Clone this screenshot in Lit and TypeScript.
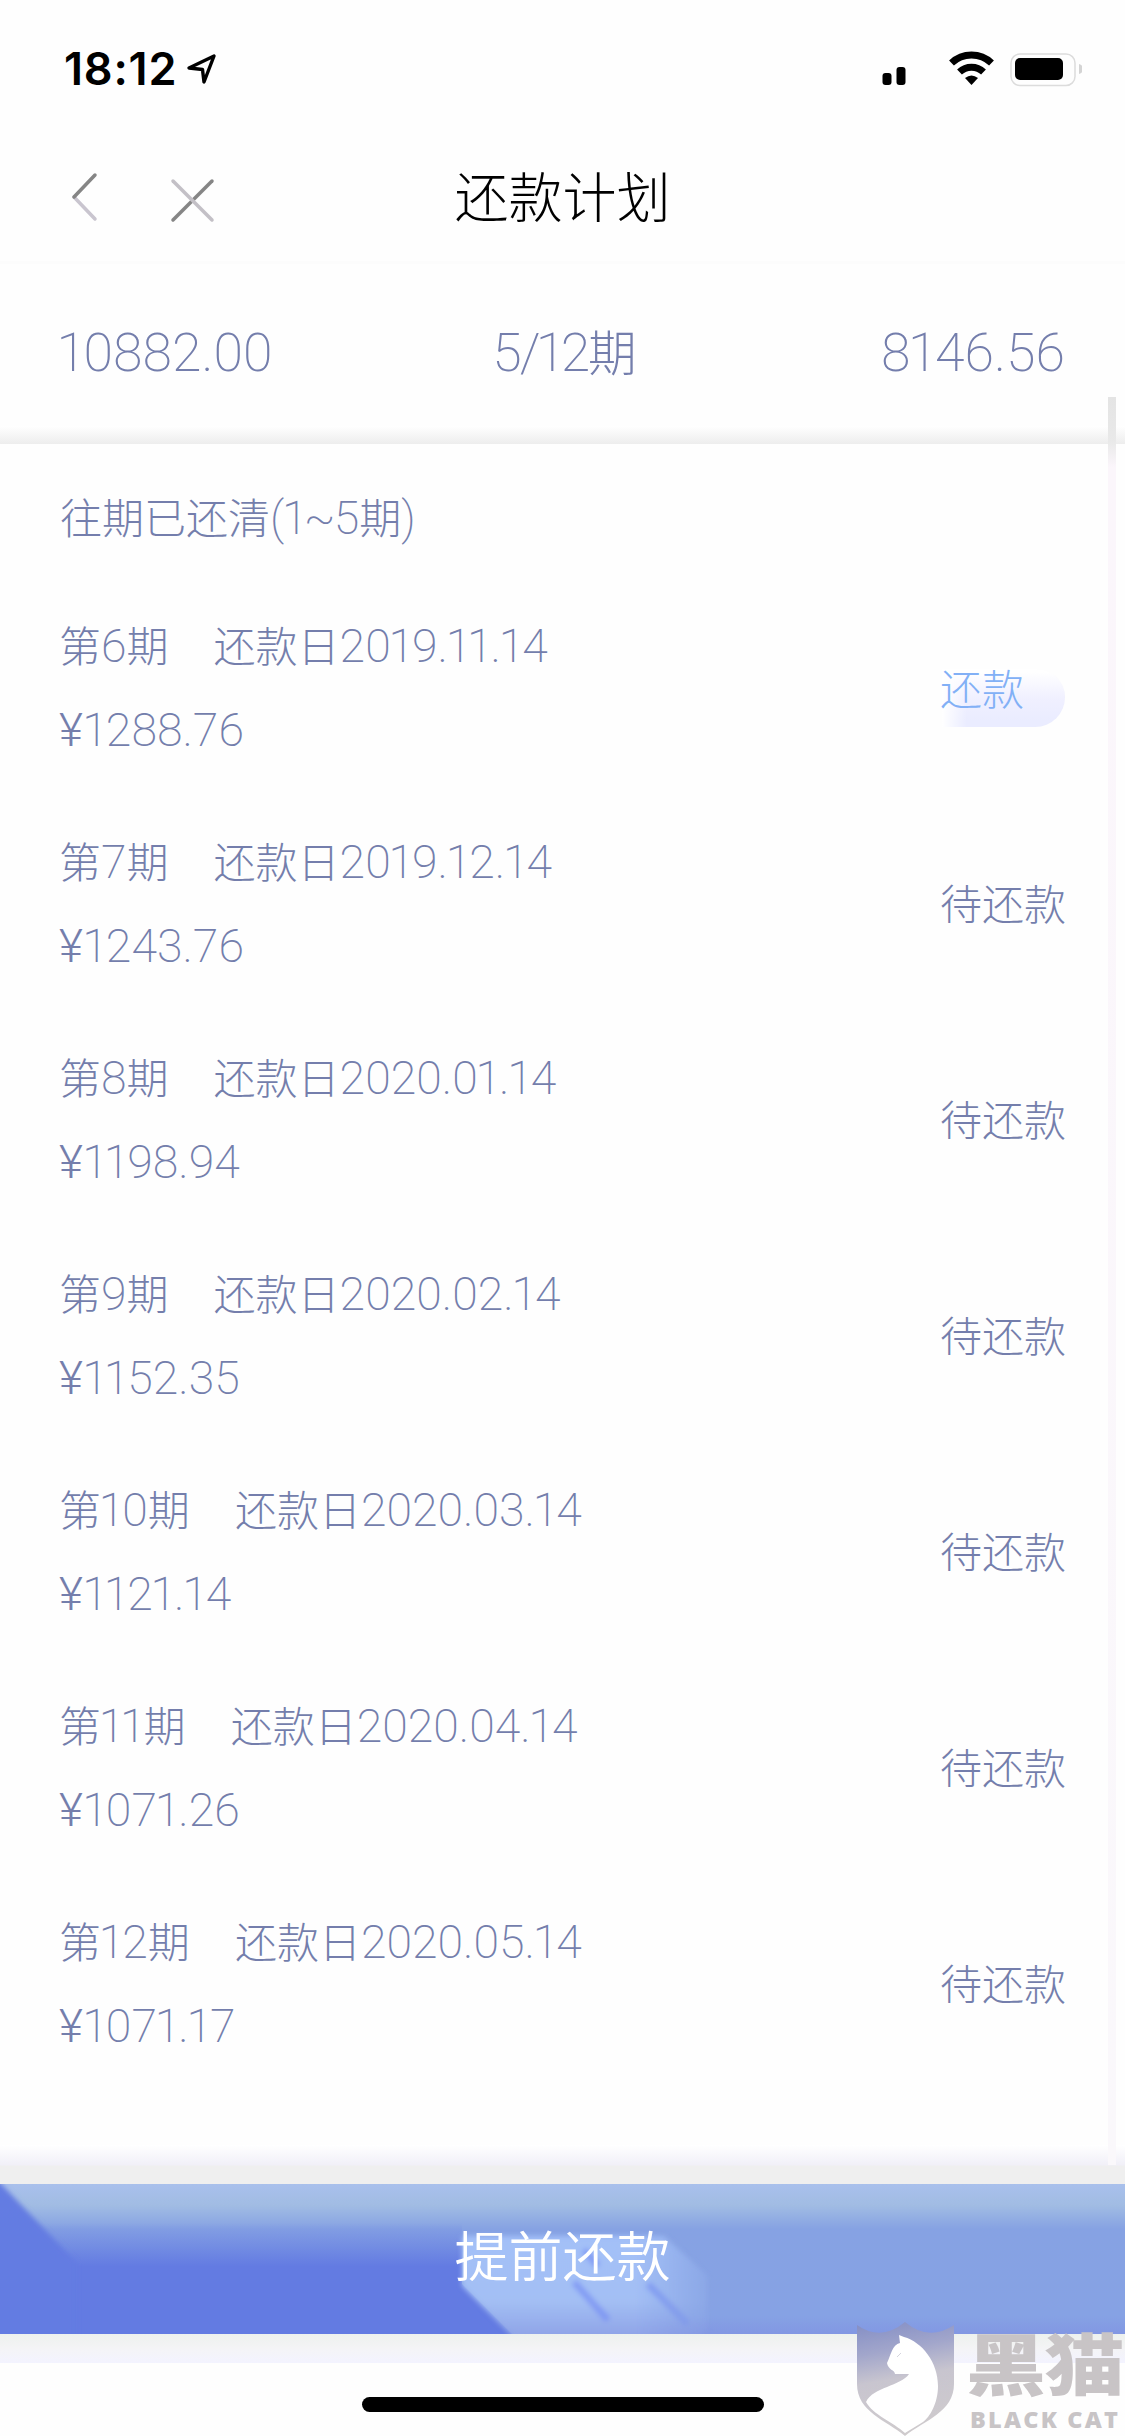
import { LitElement, html, css } from "lit";
import { customElement, property } from "lit/decorators.js";

interface Installment {
  no: string;
  date: string;
  amount: string;
  due: boolean;
}

const PLAN: Installment[] = [
  { no: "6", date: "2019.11.14", amount: "1288.76", due: true },
  { no: "7", date: "2019.12.14", amount: "1243.76", due: false },
  { no: "8", date: "2020.01.14", amount: "1198.94", due: false },
  { no: "9", date: "2020.02.14", amount: "1152.35", due: false },
  { no: "10", date: "2020.03.14", amount: "1121.14", due: false },
  { no: "11", date: "2020.04.14", amount: "1071.26", due: false },
  { no: "12", date: "2020.05.14", amount: "1071.17", due: false },
];

/** Characters that take their own side bearings inside a run of digits. */
const FITTED: Record<string, string> = { "1": "one", "¥": "yen", "~": "tilde" };

/** A line of text whose digits are set in the Latin face, a little larger than the Chinese. */
@customElement("mixed-text")
class MixedText extends LitElement {
  @property() text = "";

  static styles = css`
    :host { display: block; white-space: pre; }
    .num {
      font-family: Roboto, "Liberation Sans", sans-serif;
      font-size: 1.105em;
      font-weight: 200;
      line-height: 1;
      letter-spacing: var(--digit-spacing, 0);
    }
    .one { margin: 0 -0.044em 0 -0.048em; }
    .yen { font-weight: 300; margin-right: 0.035em; }
    .tilde { margin: 0 -0.04em; }
  `;

  private digits(run: string) {
    return run
      .split(/([1¥~])/)
      .filter((p) => p !== "")
      .map((p) => (FITTED[p] ? html`<span class=${FITTED[p]}>${p}</span>` : p));
  }

  render() {
    const parts = this.text.split(/([0-9.¥/~()]+)/).filter((p) => p !== "");
    return html`${parts.map((p) =>
      /^[0-9.¥/~()]/.test(p)
        ? html`<span class="num">${this.digits(p)}</span>`
        : html`<span>${p}</span>`
    )}`;
  }
}

@customElement("status-bar")
class StatusBar extends LitElement {
  static styles = css`
    :host { display: flex; height: 132px; box-sizing: border-box; padding: 44px 43px 0 64px; justify-content: space-between; color: #000; }
    .left, .right { display: flex; height: 50px; align-items: center; }
    .time { font: 600 45px/50px Inter, sans-serif; letter-spacing: 0.8px; }
    svg { display: block; }
  `;
  render() {
    return html`
      <div class="left">
        <span class="time">18:12</span>
        <svg width="44" height="50" viewBox="0 0 44 50">
          <path d="M12 24 L37 12 L27 38 L25.500 25.500 Z" fill="none" stroke="#000" stroke-width="3.400" stroke-linejoin="round" />
        </svg>
      </div>
      <div class="right">
        <svg width="204" height="50" viewBox="878 44 204 50">
          <rect x="882.5" y="73" width="9" height="12" rx="3" />
          <rect x="896.5" y="67" width="9" height="18" rx="3" />
          <g fill="none" stroke="#000">
            <path d="M951.5 63 A29 29 0 0 1 991.500 63" stroke-width="7" />
            <path d="M959.500 72 A17.500 17.500 0 0 1 983.500 72" stroke-width="7" />
          </g>
          <path d="M965 78 Q971.500 73 978 78 L971.500 85 Z" />
          <rect x="1011" y="54" width="64" height="31.500" rx="9" fill="none" stroke="#dcdcdc" stroke-width="1.500" />
          <rect x="1015" y="58" width="48" height="22" rx="5" />
          <path d="M1079 64 q4 1 4 5 t-4 5" fill="#d4d4d4" />
        </svg>
      </div>
    `;
  }
}

@customElement("nav-header")
class NavHeader extends LitElement {
  static styles = css`
    :host { display: grid; grid-template-columns: 1fr auto 1fr; align-items: center; height: 132px; box-sizing: border-box; padding: 0 68px; border-bottom: 3px solid #fcfcfc; }
    .actions { display: flex; gap: 68px; }
    .title { font-size: 54px; line-height: 70px; color: #000; padding-bottom: 4px; }
    svg { display: block; }
  `;
  render() {
    return html`
      <div class="actions">
        <svg width="32" height="52" viewBox="0 0 32 52" fill="none" stroke-width="3.500" stroke-linecap="round">
          <path d="M6 26 L27 48" stroke="#c9c5cf" />
          <path d="M27 4 L6 26" stroke="#858585" />
        </svg>
        <svg width="48" height="52" viewBox="0 0 48 52" fill="none" stroke-width="3.500" stroke-linecap="round">
          <path d="M5 49 L44 10" stroke="#858585" />
          <path d="M5 10 L44 49" stroke="#c3c0c6" />
        </svg>
      </div>
      <div class="title">还款计划</div>
      <div></div>
    `;
  }
}

@customElement("loan-summary")
class LoanSummary extends LitElement {
  static styles = css`
    :host { display: flex; flex-direction: column; height: 180px; color: #747eac; font-size: 48.500px; }
    .row { flex: 1; display: grid; grid-template-columns: 1fr auto 1fr; align-items: center; padding: 10px 60px 0 59px; }
    .mid { padding-left: 5px; --digit-spacing: -0.04em; }
    .end { justify-self: end; }
    .band { height: 18px; background: linear-gradient(#fff, #ededed); }
  `;
  render() {
    return html`
      <div class="row">
        <mixed-text text="10882.00"></mixed-text>
        <mixed-text class="mid" text="5/12期"></mixed-text>
        <mixed-text class="end" text="8146.56"></mixed-text>
      </div>
      <div class="band"></div>
    `;
  }
}

@customElement("plan-row")
class PlanRow extends LitElement {
  @property({ attribute: false }) item!: Installment;

  static styles = css`
    :host { display: flex; justify-content: space-between; align-items: center; height: 216px; box-sizing: border-box; padding: 0 59px 5px 59px; color: #747eac; font-size: 42px; }
    .info { display: flex; flex-direction: column; gap: 24px; }
    .line { display: flex; gap: 45px; height: 60px; align-items: center; }
    .status { font-size: 42px; line-height: 60px; }
    .pay {
      width: 123px; height: 58px; margin: 24px 1px 0 0; line-height: 36px; text-indent: -2px; color: #82b0f6;
      border-radius: 0 30px 32px 0;
      background: linear-gradient(90deg, #fff 0, rgba(255, 255, 255, 0) 20%), linear-gradient(#fff 5%, #f0f0ff 50%, #eaecff 90%);
    }
  `;
  render() {
    const { no, date, amount, due } = this.item;
    return html`
      <div class="info">
        <div class="line">
          <mixed-text text=${`第${no}期`}></mixed-text>
          <mixed-text text=${`还款日${date}`}></mixed-text>
        </div>
        <div class="line"><mixed-text text=${`¥${amount}`}></mixed-text></div>
      </div>
      ${due ? html`<div class="status pay">还款</div>` : html`<div class="status">待还款</div>`}
    `;
  }
}

@customElement("prepay-bar")
class PrepayBar extends LitElement {
  static styles = css`
    :host { display: block; }
    .lead { height: 39px; background: linear-gradient(#fff 0, #f1f0f8 50%, #efefef 55%, #efefef 100%); }
    .button { position: relative; height: 150px; display: flex; align-items: center; justify-content: center; color: #fff; font-size: 54px; font-weight: 350; }
    .bg { position: absolute; left: 0; top: 0; width: 100%; height: 100%; }
    .label { position: relative; line-height: 70px; padding-bottom: 10px; }
    .tail { height: 29px; background: linear-gradient(#edf1ee, #f4f4f6 50%, #f3f3ff); }
  `;
  render() {
    return html`
      <div class="lead"></div>
      <div class="button">
        <svg class="bg" viewBox="0 0 1125 150" preserveAspectRatio="none">
          <defs>
            <linearGradient id="sky" x1="0" y1="0" x2="0" y2="1">
              <stop offset="0" stop-color="#a9c0ec" />
              <stop offset="0.14" stop-color="#a1bce3" />
              <stop offset="0.3" stop-color="#86a2e3" />
              <stop offset="0.88" stop-color="#86a2e4" />
              <stop offset="1" stop-color="#8297e3" />
            </linearGradient>
            <linearGradient id="deep" x1="0" y1="0" x2="0" y2="1">
              <stop offset="0.26" stop-color="#637be2" stop-opacity="0" />
              <stop offset="0.55" stop-color="#637be2" />
            </linearGradient>
            <linearGradient id="glow" x1="0" y1="0" x2="0" y2="1">
              <stop offset="0" stop-color="#a3c0f8" />
              <stop offset="0.6" stop-color="#a3bff4" />
              <stop offset="1" stop-color="#8a9de4" />
            </linearGradient>
            <linearGradient id="fade" x1="0" y1="0" x2="1" y2="0">
              <stop offset="0.74" stop-color="#fff" />
              <stop offset="1" stop-color="#fff" stop-opacity="0.1" />
            </linearGradient>
            <mask id="trail"><rect x="400" width="316" height="150" fill="url(#fade)" /></mask>
            <filter id="soft" x="-20%" y="-20%" width="140%" height="140%"><feGaussianBlur stdDeviation="2.500" /></filter>
          </defs>
          <rect width="1125" height="150" fill="url(#sky)" />
          <path d="M0 0 H462 V100 L512 150 H0 Z" fill="url(#deep)" />
          <path d="M-20 -22 L76 78 V170 H-20 Z" fill="#637be2" filter="url(#soft)" />
          <g filter="url(#soft)" mask="url(#trail)">
            <path d="M462 52 L560 52 L664 52 L708 92 V146 L690 160 H520 L462 102 Z" fill="url(#glow)" />
            <g stroke="#7890f4" stroke-width="7" fill="none" opacity="0.75">
              <path d="M574 98 L608 136" />
              <path d="M648 100 L688 140" />
              <path d="M584 66 L598 82" />
            </g>
          </g>
        </svg>
        <span class="label">提前还款</span>
      </div>
      <div class="tail"></div>
    `;
  }
}

@customElement("cat-mark")
class CatMark extends LitElement {
  static styles = css`
    :host { display: flex; gap: 12px; width: 270px; height: 116px; }
    .shield { display: block; flex: none; }
    .words { display: flex; flex-direction: column; color: #c8c4c6; padding-top: 8px; }
    .cn { font: 900 80px/79px "Noto Sans CJK SC", sans-serif; letter-spacing: -1.500px; height: 77px; transform: scaleY(0.84); transform-origin: 0 0; white-space: nowrap; }
    .en { font: 800 23.500px/28px "Open Sans", sans-serif; letter-spacing: 2.200px; padding-left: 4px; white-space: nowrap; }
  `;
  render() {
    return html`
      <svg class="shield" width="98" height="116" viewBox="856 2320 98 116">
        <defs>
          <linearGradient id="steel" x1="0.3" y1="0" x2="0.45" y2="1">
            <stop offset="0" stop-color="#8791c6" />
            <stop offset="0.25" stop-color="#a2a6cb" />
            <stop offset="0.5" stop-color="#c8c5cf" />
            <stop offset="1" stop-color="#cfcbcd" />
          </linearGradient>
        </defs>
        <path fill="url(#steel)" d="M857 2325 Q881 2342 905 2322 Q929 2342 954 2325 V2384 C954 2412 925 2420 905 2436 C886 2420 857 2412 857 2384 Z" />
        <path fill="#fff" d="M899 2335 L904 2337 C922 2342 938 2362 938 2386 C938 2403 930 2417 923 2422 L905 2433 C893 2422 873 2415 866 2402 C873 2387 901 2386 909 2374 H895 C895 2370 888 2370 887 2363 C891 2355 892 2345 900 2343 Z" />
        <path d="M897 2357 L901 2353" stroke="#d5d5de" fill="none" />
      </svg>
      <div class="words">
        <div class="cn">黑猫</div>
        <div class="en">BLACK CAT</div>
      </div>
    `;
  }
}

@customElement("app-root")
class AppRoot extends LitElement {
  static styles = css`
    :host {
      display: flex; flex-direction: column; position: relative; width: 1125px; height: 2436px; overflow: hidden;
      background: #fefefe; font-family: "Noto Sans CJK SC", sans-serif; font-weight: 300;
    }
    .list { flex: 1; }
    .settled { height: 136px; box-sizing: border-box; padding: 6px 60px 0; display: flex; align-items: center; color: #747eac; font-size: 42px; }
    .home { height: 73px; display: flex; justify-content: center; padding-top: 34px; box-sizing: border-box; }
    .pill { width: 402px; height: 15px; border-radius: 8px; background: #000; }
    .scroll { position: absolute; left: 1108px; top: 397px; width: 8px; height: 1768px; background: linear-gradient(#e4e4e4 0, #e9e9e9 45px, #fbf6fb 70px, #faf8fb 100%); }
    .mark { position: absolute; left: 856px; top: 2320px; }
  `;
  render() {
    return html`
      <status-bar></status-bar>
      <nav-header></nav-header>
      <loan-summary></loan-summary>
      <div class="list">
        <div class="settled"><mixed-text text="往期已还清(1~5期)"></mixed-text></div>
        ${PLAN.map((item) => html`<plan-row .item=${item}></plan-row>`)}
      </div>
      <prepay-bar></prepay-bar>
      <div class="home"><div class="pill"></div></div>
      <div class="scroll"></div>
      <cat-mark class="mark"></cat-mark>
    `;
  }
}
